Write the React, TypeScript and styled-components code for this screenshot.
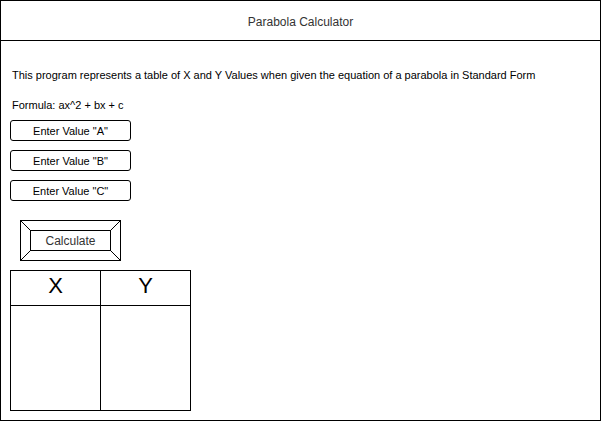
import styled, { createGlobalStyle } from "styled-components";

const GlobalStyle = createGlobalStyle`
  html, body {
    margin: 0;
    padding: 0;
    background: #fff;
  }
  body {
    font-family: "Liberation Sans", Arial, Helvetica, sans-serif;
    color: #000;
  }
`;

const Frame = styled.div`
  width: 601px;
  height: 421px;
  box-sizing: border-box;
  border: 1px solid #000;
  display: flex;
  flex-direction: column;
`;

const Header = styled.div`
  height: 40px;
  box-sizing: border-box;
  border-bottom: 1px solid #000;
  display: flex;
  align-items: center;
  justify-content: center;
  font-size: 12px;
  line-height: 14px;
  color: #333;
  padding-top: 2px;
`;

const Body = styled.div`
  display: flex;
  flex-direction: column;
  align-items: flex-start;
  padding: 28px 0 0 9px;
`;

const Text = styled.p<{ $gap?: number }>`
  margin: ${(p) => p.$gap ?? 0}px 0 0 2px;
  font-size: 11px;
  line-height: 13px;
`;

const Inputs = styled.div`
  display: flex;
  flex-direction: column;
  gap: 9px;
  margin-top: 8px;
`;

const ValueBox = styled.div`
  width: 121px;
  height: 21px;
  box-sizing: border-box;
  border: 1px solid #000;
  border-radius: 3px;
  display: flex;
  align-items: center;
  justify-content: center;
  font-size: 11px;
`;

const Bevel = styled.div`
  position: relative;
  width: 101px;
  height: 41px;
  margin: 19px 0 0 10px;
  display: flex;
  align-items: center;
  justify-content: center;
`;

const BevelLines = styled.svg`
  position: absolute;
  inset: 0;
`;

const BevelFace = styled.div`
  position: relative;
  width: 81px;
  height: 21px;
  display: flex;
  align-items: center;
  justify-content: center;
  font-size: 12px;
  color: #333;
`;

const Table = styled.div`
  width: 181px;
  height: 141px;
  margin-top: 9px;
  box-sizing: border-box;
  border: 1px solid #000;
  display: grid;
  grid-template-columns: 90px 89px;
  grid-template-rows: 35px 1fr;
`;

const Cell = styled.div<{ $head?: boolean; $first?: boolean }>`
  border-right: ${(p) => (p.$first ? "1px solid #000" : "none")};
  border-bottom: ${(p) => (p.$head ? "1px solid #000" : "none")};
  display: flex;
  align-items: center;
  justify-content: center;
  font-size: 22px;
  padding-bottom: ${(p) => (p.$head ? 5 : 0)}px;
`;

const BevelButton = ({ label }: { label: string }) => (
  <Bevel>
    <BevelLines width="101" height="41" viewBox="0 0 101 41">
      <g stroke="#000" strokeWidth="1" fill="none">
        <rect x="0.5" y="0.5" width="100" height="40" />
        <rect x="10.5" y="10.5" width="80" height="20" />
        <line x1="0.5" y1="0.5" x2="10.5" y2="10.5" />
        <line x1="100.5" y1="0.5" x2="90.5" y2="10.5" />
        <line x1="0.5" y1="40.5" x2="10.5" y2="30.5" />
        <line x1="100.5" y1="40.5" x2="90.5" y2="30.5" />
      </g>
    </BevelLines>
    <BevelFace>{label}</BevelFace>
  </Bevel>
);

export default function App() {
  return (
    <>
      <GlobalStyle />
      <Frame>
        <Header>Parabola Calculator</Header>
        <Body>
          <Text>
            This program represents a table of X and Y Values when given the
            equation of a parabola in Standard Form
          </Text>
          <Text $gap={17}>Formula: ax^2 + bx + c</Text>
          <Inputs>
            <ValueBox>Enter Value "A"</ValueBox>
            <ValueBox>Enter Value "B"</ValueBox>
            <ValueBox>Enter Value "C"</ValueBox>
          </Inputs>
          <BevelButton label="Calculate" />
          <Table>
            <Cell $head $first>X</Cell>
            <Cell $head>Y</Cell>
            <Cell $first />
            <Cell />
          </Table>
        </Body>
      </Frame>
    </>
  );
}
